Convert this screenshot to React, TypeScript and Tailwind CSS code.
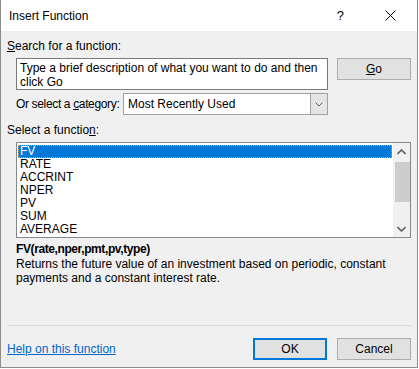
import React from 'react';

const items = ['FV', 'RATE', 'ACCRINT', 'NPER', 'PV', 'SUM', 'AVERAGE'];

const Chevron = ({ up, className }: { up?: boolean; className?: string }) => (
	<svg width="9" height="6" viewBox="0 0 9 6" className={className}>
		<path
			d={up ? 'M0.5 5 L4.5 1 L8.5 5' : 'M0.5 1 L4.5 5 L8.5 1'}
			fill="none"
			stroke="#606060"
			strokeWidth="1.6"
		/>
	</svg>
);

export default function App() {
	return (
		<div className="w-[419px] h-[369px] bg-white font-['Liberation_Sans',Arial,sans-serif] text-[12px] text-black">
			<div className="w-[418px] h-[368px] border-l border-r border-b border-[#8c8c8c] flex flex-col bg-[#f0f0f0]">
				{/* title bar */}
				<div className="h-[31px] bg-white flex items-center pl-[8px] shrink-0">
					<span className="leading-[14px]">Insert Function</span>
					<span className="ml-auto mr-[41px] text-[13px]">?</span>
					<svg width="11" height="11" viewBox="0 0 11 11" className="mr-[21px]">
						<path d="M0.5 0.5 L10.5 10.5 M10.5 0.5 L0.5 10.5" stroke="#000" strokeWidth="1" />
					</svg>
				</div>

				<div className="flex-1 flex flex-col pl-[6px] pr-[6px]">
					<div className="mt-[8px] leading-[14px] h-[14px]">
						<span className="underline">S</span>earch for a function:
					</div>

					<div className="mt-[5px] flex items-start">
						<div className="ml-[9px] w-[312px] h-[32px] bg-white border border-[#7a7a7a] pl-[3px] pt-[2px] leading-[14px]">
							Type a brief description of what you want to do and then click Go
						</div>
						<button className="ml-auto w-[74px] h-[22px] bg-[#e1e1e1] border border-[#adadad] leading-[14px]">
							<span className="underline">G</span>o
						</button>
					</div>

					<div className="mt-[3px] flex items-center h-[22px]">
						<span className="ml-[9px] w-[107px] whitespace-nowrap leading-[14px] tracking-[-0.35px]">
							Or select a <span className="underline">c</span>ategory:
						</span>
						<div className="w-[205px] h-[22px] bg-white border border-[#a0a0a0] flex items-center">
							<span className="pl-[4px] leading-[14px]">Most Recently Used</span>
							<div className="ml-auto w-[17px] h-full bg-[#e5e5e5] border-l border-[#a0a0a0] flex items-center justify-center">
								<svg width="8" height="5" viewBox="0 0 8 5">
									<path d="M0.5 0.5 L4 4 L7.5 0.5" fill="none" stroke="#606060" strokeWidth="1" />
								</svg>
							</div>
						</div>
					</div>

					<div className="mt-[8px] leading-[14px] h-[14px]">
						Select a functio<span className="underline">n</span>:
					</div>

					<div className="mt-[5px] ml-[9px] h-[96px] bg-white border border-[#828790] flex">
						<div className="flex-1 pt-[2px] px-[1px]">
							{items.map((it, i) => (
								<div
									key={it}
									className={
										i === 0
											? 'h-[13px] leading-[13px] pl-[2px] bg-[#0078d7] text-white outline outline-1 outline-dotted outline-[#f0a030] -outline-offset-1'
											: 'h-[13px] leading-[13px] pl-[2px]'
									}
								>
									{it}
								</div>
							))}
						</div>
						<div className="w-[17px] bg-[#f0f0f0] flex flex-col items-center">
							<div className="h-[17px] flex items-center justify-center">
								<Chevron up />
							</div>
							<div className="mt-[2px] ml-[1px] w-[15px] h-[40px] bg-[#cdcdcd]" />
							<div className="mt-auto h-[17px] flex items-center justify-center">
								<Chevron />
							</div>
						</div>
					</div>

					<div className="mt-[4px] ml-[9px] leading-[14px] font-bold tracking-[-0.4px]">FV(rate,nper,pmt,pv,type)</div>
					<div className="mt-[1px] ml-[9px] leading-[14px] pr-[2px]">
						Returns the future value of an investment based on periodic, constant payments and a constant
						interest rate.
					</div>

					<div className="mt-auto h-[1px] bg-[#dadada]" />
					<div className="mt-[12px] mb-[7px] flex items-center h-[22px]">
						<a className="text-[#0066cc] underline leading-[14px] cursor-pointer">Help on this function</a>
						<button className="ml-auto w-[74px] h-[22px] bg-[#e1e1e1] border-2 border-[#0078d7] leading-[14px]">
							OK
						</button>
						<button className="ml-[10px] w-[74px] h-[22px] bg-[#e1e1e1] border border-[#adadad] leading-[14px]">
							Cancel
						</button>
					</div>
				</div>
			</div>
		</div>
	);
}
